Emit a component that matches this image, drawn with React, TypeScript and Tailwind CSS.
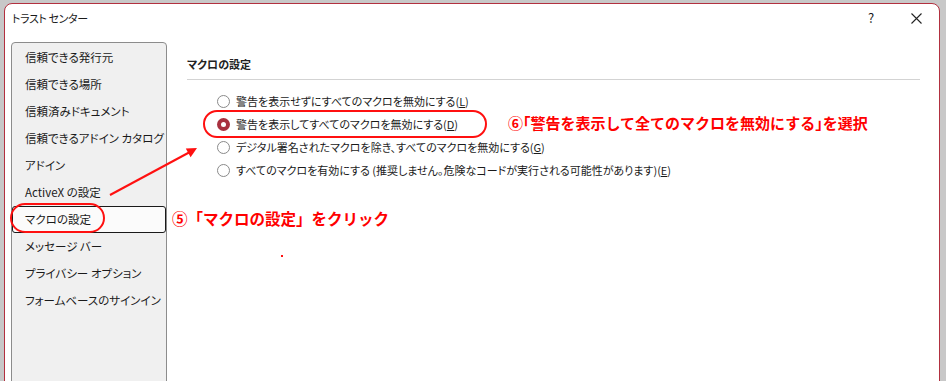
import React from "react";

const navItems = [
  "信頼できる発行元",
  "信頼できる場所",
  "信頼済みドキュメント",
  "信頼できるアドイン カタログ",
  "アドイン",
  "ActiveX の設定",
  "マクロの設定",
  "メッセージ バー",
  "プライバシー オプション",
  "フォームベースのサインイン",
];

const options = [
  { text: "警告を表示せずにすべてのマクロを無効にする", key: "L" },
  { text: "警告を表示してすべてのマクロを無効にする", key: "D", checked: true },
  { text: "デジタル署名されたマクロを除き、すべてのマクロを無効にする", key: "G" },
  { text: "すべてのマクロを有効にする (推奨しません。危険なコードが実行される可能性があります)", key: "E" },
];

function Radio({ checked }: { checked?: boolean }) {
  if (checked) {
    return (
      <span className="w-[13px] h-[13px] rounded-full bg-[#a8313f] flex items-center justify-center shrink-0">
        <span className="w-[5px] h-[5px] rounded-full bg-white" />
      </span>
    );
  }
  return <span className="w-[13px] h-[13px] rounded-full border border-[#8a8a8a] bg-white shrink-0" />;
}

export default function App() {
  const ui = "font-['Noto_Sans_CJK_JP','Noto_Sans',sans-serif] [font-feature-settings:'palt']";
  return (
    <div className="relative w-[946px] h-[381px] overflow-hidden bg-[#c8c8c8] pt-[3px] pl-[4px]">
      <div className={`w-[936px] h-[400px] bg-white border border-[#b2303f] rounded-t-[8px] text-[#1a1a1a] ${ui}`}>
        {/* title bar */}
        <div className="h-[28px] flex items-center pl-[7px] text-[11px]">
          <span className="flex-1 tracking-[-0.4px]">トラスト センター</span>
          <span className="w-[14px] text-center text-[13px] mr-[33px]">?</span>
          <svg width="11" height="11" viewBox="0 0 11 11" className="mr-[17px]">
            <path d="M0.5 0.5 L10.5 10.5 M10.5 0.5 L0.5 10.5" stroke="#222" strokeWidth="1.1" />
          </svg>
        </div>

        <div className="flex mt-[10px]">
          {/* nav */}
          <div className="ml-[6px] w-[156px] h-[360px] bg-[#f0f0f0] border border-[#8c8c8c] rounded-t-[4px] pt-[1px] text-[11.5px] whitespace-nowrap">
            {navItems.map((item) =>
              item === "マクロの設定" ? (
                <div key={item} className="h-[27px] flex items-center pl-[12px] bg-[#fbfbfb] border border-[#1a1a1a] rounded-[3px]">
                  {item}
                </div>
              ) : (
                <div key={item} className="h-[27px] flex items-center pl-[13px]">
                  {item}
                </div>
              )
            )}
          </div>

          {/* content */}
          <div className="flex-1 ml-[20px] mr-[19px]">
            <div className="pt-[13px] pb-[6px] leading-[18px] text-[11px] font-semibold border-b border-[#d3d3d3] text-[#222]">
              マクロの設定
            </div>
            <div className="mt-[10px] pl-[30px] text-[11px] whitespace-nowrap">
              {options.map((o) => (
                <div key={o.key} className="h-[23px] flex items-center gap-[6px]">
                  <Radio checked={o.checked} />
                  <span>
                    {o.text}(<span className="underline">{o.key}</span>)
                  </span>
                </div>
              ))}
            </div>
          </div>
        </div>
      </div>

      {/* annotations */}
      <div className="absolute left-[10px] top-[203px] w-[95px] h-[30px] border-2 border-[#ff1010] rounded-[16px]" />
      <div className="absolute left-[203px] top-[110px] w-[284px] h-[28px] border-2 border-[#ff1010] rounded-[14px]" />
      <svg className="absolute left-0 top-0 pointer-events-none" width="946" height="381">
        <line x1="110" y1="195" x2="189" y2="152.5" stroke="#ff1010" strokeWidth="2" />
        <polygon points="197,148 190.6,157.2 185.8,148.4" fill="#ff1010" />
        <rect x="281" y="255" width="2" height="2" fill="#ff1010" />
      </svg>
      <div className="absolute left-[172px] top-[207px] text-[15.5px] leading-[22px] font-bold text-[#ff0000] font-['Noto_Sans_CJK_JP',sans-serif] whitespace-nowrap">
        ⑤「マクロの設定」をクリック
      </div>
      <div className="absolute left-[508px] top-[112px] text-[15px] leading-[22px] font-bold text-[#ff0000] font-['Noto_Sans_CJK_JP',sans-serif] whitespace-nowrap">
        ⑥<span className="[font-feature-settings:'halt']">「</span>警告を表示して全てのマクロを無効にする<span className="[font-feature-settings:'halt']">」</span>を選択
      </div>
    </div>
  );
}
